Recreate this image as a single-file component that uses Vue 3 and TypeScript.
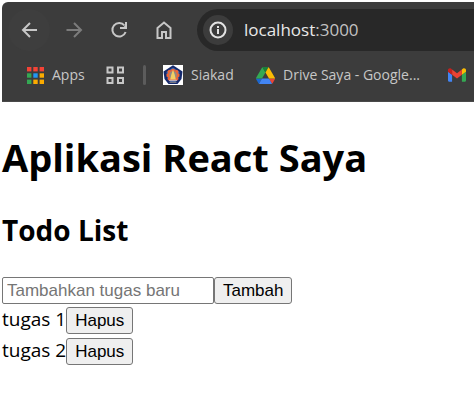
<script setup lang="ts">
import { ref } from 'vue'

interface Task {
  id: number
  text: string
}

const draft = ref('')
const address = ref('3000')
const tasks = ref<Task[]>([
  { id: 1, text: 'tugas 1' },
  { id: 2, text: 'tugas 2' },
])

const appDots = [
  '#f44336', '#f44336', '#f44336',
  '#34a853', '#2196f3', '#fbab00',
  '#34a853', '#fbab00', '#fbab00',
]

function addTask() {
  const text = draft.value.trim()
  if (!text) return
  tasks.value.push({ id: Date.now(), text })
  draft.value = ''
}

function removeTask(id: number) {
  tasks.value = tasks.value.filter((task) => task.id !== id)
}
</script>

<template>
  <div class="window">
    <header class="browser">
      <div class="toolbar">
        <button class="nav back" type="button" aria-label="Back">
          <svg viewBox="0 0 20 20"><path d="M18 10H4M11 3l-7 7 7 7" /></svg>
        </button>
        <button class="nav" type="button" aria-label="Forward" disabled>
          <svg viewBox="0 0 20 20"><path d="M2.500 10h14M10 3l7 7-7 7" /></svg>
        </button>
        <button class="nav" type="button" aria-label="Reload">
          <svg viewBox="0 0 20 20">
            <path d="M15.500 5.500A6.800 6.800 0 1 0 16.600 12" />
            <path class="tip" d="M18 2v7h-7V7h3.600L16 5.600V2z" />
          </svg>
        </button>
        <button class="nav" type="button" aria-label="Home">
          <svg viewBox="0 0 20 20"><path d="M3.500 8L10 2.500 16.500 8v10h-4.500v-6h-4v6H3.500z" /></svg>
        </button>
        <div class="omnibox">
          <button class="info" type="button" aria-label="Site information">
            <svg viewBox="0 0 20 20"><circle cx="10" cy="10" r="7.500" /><path d="M10 9v5M10 6v2" /></svg>
          </button>
          <span class="url">localhost<span class="port">:{{ address }}</span></span>
        </div>
      </div>
      <nav class="bookmarks">
        <a class="bookmark apps" href="#">
          <svg class="dots" viewBox="0 0 17 17">
            <rect
              v-for="(color, i) in appDots"
              :key="i"
              :x="(i % 3) * 6.300"
              :y="Math.floor(i / 3) * 6.300"
              width="4.400"
              height="4.400"
              :fill="color"
            />
          </svg>
          <span>Apps</span>
        </a>
        <a class="bookmark groups" href="#" aria-label="Tab groups">
          <svg viewBox="0 0 19 19"><path d="M1.500 1.500h5v5h-5zM12 1.500h5v5h-5zM1.500 12h5v5h-5zM12 12h5v5h-5z" /></svg>
        </a>
        <span class="divider"></span>
        <a class="bookmark siakad" href="#">
          <svg viewBox="0 0 20 20">
            <path d="M0 0h20v20H0z" fill="#fff" />
            <path d="M10 .3L19.500 6.500 18.500 14 14.500 19h-9L1.500 14 .5 6.500z" fill="#152a6e" />
            <path d="M10 2.500l6.500 4.500-1 6.500-3 3.500h-5l-3-3.500-1-6.500z" fill="#4a6cab" />
            <path d="M8.500 4h3l.5 1.500 2-.8 1.600 1.600-.8 2 1.700.7v2.500l-1.700.7.7 2-1.500 1.600H6l-1.500-1.600.7-2-1.700-.7V9l1.700-.7-.8-2L6 4.700l2 .8z" fill="#ee6535" />
            <circle cx="10" cy="10" r="3.800" fill="#8f8a86" />
            <path d="M10 4.500l1.800 5.500 1 4.500H7.200l1-4.500z" fill="#f2cf63" />
            <path d="M6 14.800h8v1H6z" fill="#b9c1d6" />
            <path d="M6.500 16.800h7v1h-7z" fill="#8f8a86" />
          </svg>
          <span>Siakad</span>
        </a>
        <a class="bookmark drive" href="#">
          <svg viewBox="0 0 87.300 78">
            <path d="m6.600 66.850 3.850 6.650c.8 1.400 1.950 2.500 3.300 3.300l13.750-23.800h-27.500c0 1.550.4 3.100 1.200 4.500z" fill="#1967d2" />
            <path d="m43.650 25-13.750-23.800c-1.350.8-2.500 1.900-3.300 3.300l-25.400 44a9.060 9.060 0 0 0-1.200 4.500h27.500z" fill="#34a853" />
            <path d="m73.550 76.800c1.350-.8 2.500-1.900 3.300-3.300l1.600-2.750 7.650-13.250c.8-1.400 1.200-2.950 1.200-4.500h-27.500l5.850 11.500z" fill="#ea4335" />
            <path d="m43.650 25 13.750-23.800c-1.350-.8-2.900-1.200-4.500-1.200h-18.500c-1.600 0-3.150.45-4.500 1.200z" fill="#188038" />
            <path d="m59.800 53h-32.300l-13.750 23.800c1.350.8 2.900 1.200 4.500 1.200h50.800c1.600 0 3.150-.45 4.500-1.200z" fill="#4285f4" />
            <path d="m73.400 26.500-12.700-22c-.8-1.400-1.950-2.500-3.300-3.300l-13.750 23.800 16.150 28h27.450c0-1.550-.4-3.100-1.200-4.500z" fill="#fbbc04" />
          </svg>
          <span>Drive Saya - Google...</span>
        </a>
        <a class="bookmark mail" href="#" aria-label="Gmail">
          <svg viewBox="52 42 88 66">
            <path fill="#4285f4" d="M58 108h14V74L52 59v43c0 3.320 2.690 6 6 6" />
            <path fill="#34a853" d="M120 108h14c3.320 0 6-2.690 6-6V59l-20 15" />
            <path fill="#fbbc04" d="M120 48v26l20-15v-8c0-7.420-8.470-11.650-14.400-7.200" />
            <path fill="#ea4335" d="M72 74V48l24 18 24-18v26L96 92" />
            <path fill="#c5221f" d="M52 51v8l20 15V48l-5.600-4.200C60.470 39.350 52 43.580 52 51" />
          </svg>
        </a>
      </nav>
    </header>

    <main class="page">
      <h1>Aplikasi React Saya</h1>
      <h2>Todo List</h2>
      <form class="entry" @submit.prevent="addTask">
        <input v-model="draft" type="text" placeholder="Tambahkan tugas baru" aria-label="Tambahkan tugas baru" />
        <button type="submit">Tambah</button>
      </form>
      <ul class="tasks">
        <li v-for="task in tasks" :key="task.id">
          <span>{{ task.text }}</span>
          <button type="button" @click="removeTask(task.id)">Hapus</button>
        </li>
      </ul>
    </main>
  </div>
</template>

<style>
body {
  background: #fff;
}
</style>

<style scoped>
.window {
  padding: 2px 0 0 2px;
  color: #000;
  font-family: "Open Sans", "Noto Sans", sans-serif;
  overflow: hidden;
}

.browser {
  height: 100px;
  box-sizing: border-box;
  border-bottom: 1px solid #4a4a4a;
  border-top-left-radius: 6px;
  background: #3c3c3c;
}

.toolbar {
  display: flex;
  align-items: center;
  gap: 3px;
  padding: 7px 0 0 6px;
}

.nav,
.info {
  display: grid;
  place-items: center;
  flex: none;
  padding: 0;
  border: 0;
  border-radius: 50%;
  background: transparent;
  color: #c7c7c7;
}

.nav {
  width: 42px;
  height: 42px;
}

.nav.back {
  background: #3e3e3e;
}

.nav:disabled {
  color: #7c7c7c;
}

.nav svg,
.info svg {
  width: 20px;
  height: 20px;
  fill: none;
  stroke: currentColor;
  stroke-width: 2;
}

.nav .tip {
  fill: currentColor;
  stroke: none;
}

.omnibox {
  display: flex;
  flex: 1;
  align-items: center;
  gap: 11px;
  height: 42px;
  margin-left: 9px;
  padding-left: 6px;
  box-sizing: border-box;
  border-radius: 21px 0 0 21px;
  background: #282828;
}

.info {
  width: 30px;
  height: 30px;
  background: #3c3c3c;
  color: #e3e3e3;
}

.url {
  color: #e8e8e8;
  font-size: 17px;
  line-height: 24px;
}

.port {
  color: #c2c2c2;
}

.bookmarks {
  display: flex;
  align-items: center;
  height: 30px;
  padding: 9px 0 0 25px;
  white-space: nowrap;
}

.bookmark {
  display: flex;
  flex: none;
  align-items: center;
  gap: 8px;
  color: #c7c7c7;
  font-size: 14px;
  line-height: 20px;
  text-decoration: none;
}

.bookmark svg {
  flex: none;
}

.apps {
  width: 79px;
}

.dots {
  width: 17px;
  height: 17px;
}

.groups svg {
  width: 19px;
  height: 19px;
  fill: none;
  stroke: #c7c7c7;
  stroke-width: 2;
}

.divider {
  flex: none;
  width: 3px;
  height: 20px;
  margin: 0 17px 0 18px;
  border-radius: 2px;
  background: #5c5c5c;
}

.siakad {
  width: 93px;
}

.siakad svg {
  width: 20px;
  height: 20px;
}

.drive {
  width: 192px;
}

.drive svg {
  width: 19px;
  height: 17px;
}

.mail svg {
  width: 18px;
  height: 14px;
}

h1,
h2 {
  margin: 0;
  font-weight: 700;
}

h1 {
  padding-top: 27px;
  font-size: 38px;
  line-height: 56px;
}

h2 {
  padding-top: 25px;
  font-size: 28px;
  line-height: 40px;
}

.entry {
  display: flex;
  margin-top: 27px;
}

.page input,
.page button {
  height: 27px;
  box-sizing: border-box;
  border: 1px solid #767676;
  border-radius: 3px;
  color: #000;
  font-family: "Liberation Sans", Arial, sans-serif;
  font-size: 17px;
  line-height: 20px;
}

.page input {
  width: 212px;
  padding: 1px 4px;
  border-radius: 2px;
  background: #fff;
}

.page input::placeholder {
  color: #757575;
}

.page button {
  padding: 0 8px;
  background: #efefef;
}

.tasks {
  display: grid;
  gap: 4px;
  margin: 3px 0 0;
  padding: 0;
  list-style: none;
}

.tasks li {
  display: flex;
  align-items: flex-start;
  font-size: 19px;
  line-height: 24px;
}
</style>
